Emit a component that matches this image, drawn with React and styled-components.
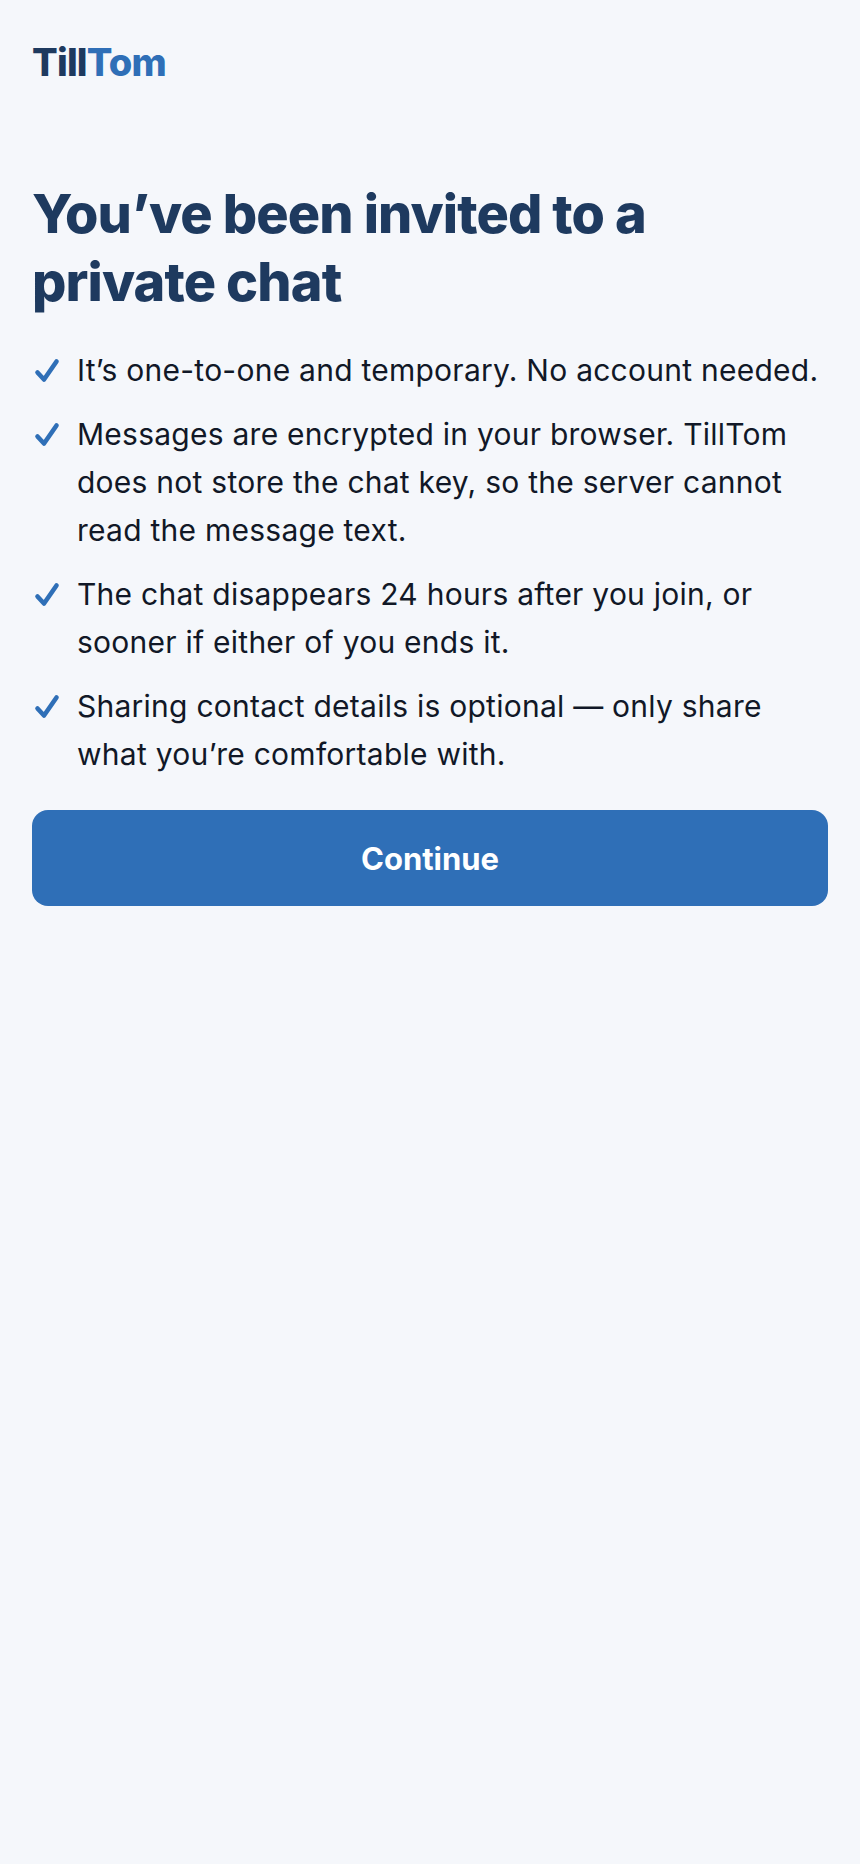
import React from 'react'
import styled, { createGlobalStyle } from 'styled-components'

const GlobalStyle = createGlobalStyle`
  html, body {
    margin: 0;
    padding: 0;
    background: #f5f7fb;
  }
  * { box-sizing: border-box; }
`

const S = {
  Page: styled.div`
    min-height: 1864px;
    padding: 40px 32px 32px;
    background: #f5f7fb;
    color: #111827;
    font-family: Inter, "Liberation Sans", sans-serif;
  `,
  Logo: styled.div`
    font-size: 38px;
    line-height: 44px;
    font-weight: 800;
    letter-spacing: -0.8px;
    color: #1e3a5f;
    margin-bottom: 96px;
  `,
  LogoAccent: styled.span`
    color: #2f6fb7;
  `,
  Title: styled.h1`
    margin: 0 0 30px;
    font-size: 54px;
    line-height: 68px;
    font-weight: 800;
    letter-spacing: -0.9px;
    color: #1e3a5f;
  `,
  List: styled.ul`
    list-style: none;
    margin: 0 0 32px;
    padding: 0;
    display: flex;
    flex-direction: column;
    gap: 16px;
  `,
  Item: styled.li`
    display: flex;
    gap: 17px;
    font-size: 30px;
    line-height: 48px;
    letter-spacing: 0.25px;
  `,
  Check: styled.svg`
    flex: none;
    width: 28px;
    height: 48px;
    color: #2f6fb7;
  `,
  Button: styled.button`
    display: block;
    width: 100%;
    height: 96px;
    border: 0;
    border-radius: 16px;
    background: #2f6fb7;
    color: #fff;
    font: 700 31px Inter, "Liberation Sans", sans-serif;
  `,
}

const points = [
  'It’s one-to-one and temporary. No account needed.',
  'Messages are encrypted in your browser. TillTom does not store the chat key, so the server cannot read the message text.',
  'The chat disappears 24 hours after you join, or sooner if either of you ends it.',
  'Sharing contact details is optional — only share what you’re comfortable with.',
]

const App = () => (
  <S.Page>
    <GlobalStyle />
    <S.Logo>Till<S.LogoAccent>Tom</S.LogoAccent></S.Logo>
    <S.Title>You’ve been invited to a private chat</S.Title>
    <S.List>
      {points.map((text) => (
        <S.Item key={text}>
          <S.Check viewBox="0 0 28 48" fill="none" stroke="currentColor" strokeWidth="4.6" strokeLinecap="round" strokeLinejoin="round">
            <path d="M5.5 26.5l6.5 7L24.5 15.5" />
          </S.Check>
          <span>{text}</span>
        </S.Item>
      ))}
    </S.List>
    <S.Button>Continue</S.Button>
  </S.Page>
)

export default App
